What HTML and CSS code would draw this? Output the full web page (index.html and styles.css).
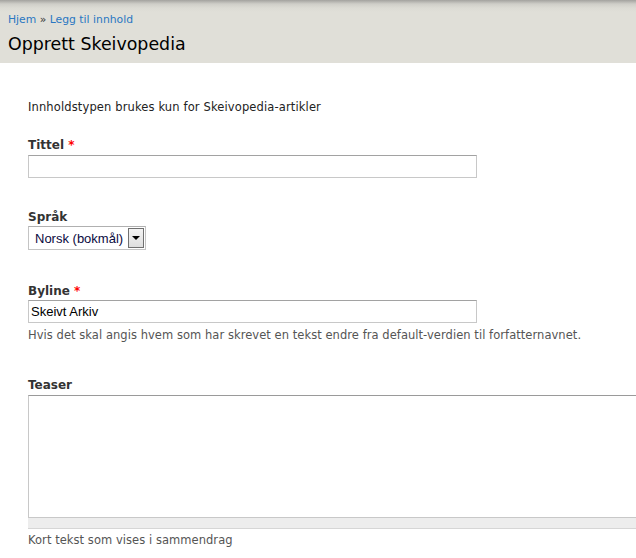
FILE: index.html
```html
<!DOCTYPE html>
<html lang="no">
<head>
<meta charset="utf-8">
<title>Opprett Skeivopedia</title>
<link rel="stylesheet" href="styles.css">
</head>
<body>
<div class="header">
  <div class="breadcrumb"><a href="#">Hjem</a> » <a href="#">Legg til innhold</a></div>
  <h1 class="title">Opprett Skeivopedia</h1>
</div>
<div class="content">
  <p class="intro">Innholdstypen brukes kun for Skeivopedia-artikler</p>

  <div class="field field-title">
    <label class="label">Tittel <span class="req">*</span></label>
    <input class="text" type="text" value="">
  </div>

  <div class="field field-lang">
    <label class="label">Språk</label>
    <div class="select">
      <span class="select-value">Norsk (bokmål)</span>
      <span class="select-btn"><span class="tri"></span></span>
    </div>
  </div>

  <div class="field field-byline">
    <label class="label">Byline <span class="req">*</span></label>
    <input class="text" type="text" value="Skeivt Arkiv">
    <div class="desc">Hvis det skal angis hvem som har skrevet en tekst endre fra default-verdien til forfatternavnet.</div>
  </div>

  <div class="field field-teaser">
    <label class="label">Teaser</label>
    <div class="textarea-wrap">
      <textarea class="textarea"></textarea>
      <div class="grip"></div>
    </div>
    <div class="desc">Kort tekst som vises i sammendrag</div>
  </div>
</div>
</body>
</html>
```

FILE: styles.css
```css
html, body {
  margin: 0;
  padding: 0;
  background: #fff;
  overflow: hidden;
}
body {
  font-family: "DejaVu Sans", Verdana, sans-serif;
  color: #222;
  width: 636px;
}
.header {
  height: 63px;
  background: linear-gradient(to bottom, #a3a29e 0px, #cfcec8 4px, #dcdbd4 8px, #e0dfd8 12px, #e0dfd8 100%);
  padding: 13px 8px 0 8px;
  box-sizing: border-box;
}
.breadcrumb {
  font-size: 10.8px;
  line-height: 14px;
  color: #333;
}
.breadcrumb a {
  color: #2a77c2;
  text-decoration: none;
}
.title {
  margin: 6px 0 0 0;
  font-size: 17.4px;
  font-weight: normal;
  line-height: 22px;
  color: #000;
}
.content {
  padding: 37px 0 0 28px;
  font-size: 11.5px;
}
.intro {
  margin: 0;
  line-height: 14px;
  color: #222;
  letter-spacing: 0.13px;
}
.field {
  display: flex;
  flex-direction: column;
  align-items: flex-start;
}
.field-title { margin-top: 23px; }
.field-lang { margin-top: 31px; }
.field-byline { margin-top: 33px; }
.field-teaser { margin-top: 35px; }
.label {
  font-weight: bold;
  font-size: 12px;
  line-height: 16px;
  color: #333;
  margin-bottom: 2px;
}
.req {
  color: #f00;
}
.text {
  box-sizing: border-box;
  width: 449px;
  height: 23px;
  margin: 0;
  border: 1px solid;
  border-color: #a2a2a2 #c8c8c8 #c8c8c8 #c8c8c8;
  padding: 1px 2px;
  font-family: "Liberation Sans", Arial, sans-serif;
  font-size: 13px;
  color: #000;
  outline: none;
}
.select {
  display: flex;
  align-items: center;
  box-sizing: border-box;
  width: 118px;
  height: 24px;
  margin-top: -1px;
  border: 1px solid #c4c4c4;
  border-top-color: #b0b0b0;
  padding: 1px;
  font-family: "Liberation Sans", Arial, sans-serif;
  font-size: 13px;
  color: #0a0a40;
}
.select-value {
  flex: 1;
  padding-left: 5px;
  white-space: nowrap;
}
.select-btn {
  box-sizing: border-box;
  width: 16px;
  height: 20px;
  border: 1px solid #707070;
  background: linear-gradient(to bottom, #f4f4f4, #dedede);
  display: flex;
  align-items: center;
  justify-content: center;
}
.tri {
  width: 0;
  height: 0;
  border-left: 4px solid transparent;
  border-right: 4px solid transparent;
  border-top: 4px solid #000;
}
.field-byline .text {
  margin-top: -1px;
}
.desc {
  margin-top: 5px;
  line-height: 14px;
  color: #555;
  letter-spacing: 0.05px;
}
.textarea-wrap {
  width: 608px;
  display: flex;
  flex-direction: column;
}
.textarea {
  display: block;
  box-sizing: border-box;
  width: 100%;
  height: 123px;
  margin: 0;
  border: 1px solid;
  border-right: none;
  border-color: #9a9a9a #c8c8c8 #c8c8c8 #c8c8c8;
  resize: none;
  outline: none;
}
.grip {
  height: 10px;
  background: #ededed;
  border-bottom: 1px solid #d6d6d6;
}
.field-teaser .desc {
  margin-top: 4px;
}
```
